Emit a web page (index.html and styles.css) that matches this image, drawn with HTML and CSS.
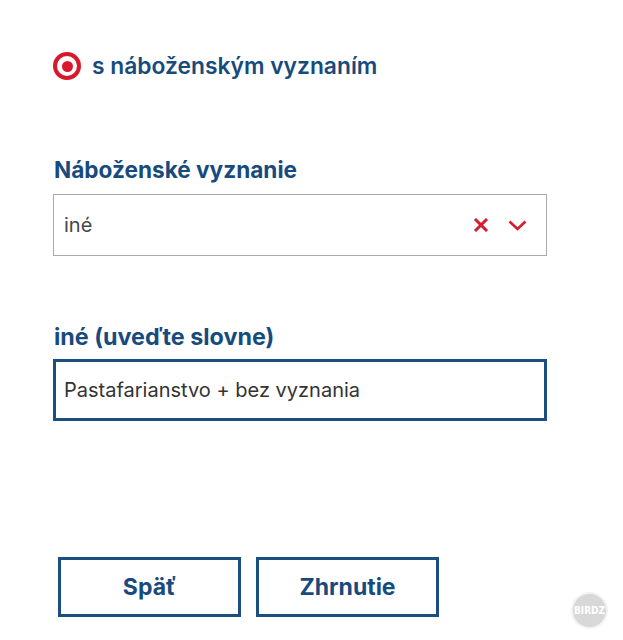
FILE: index.html
```html
<!DOCTYPE html>
<html lang="sk">
<head>
    <meta charset="UTF-8">
    <title>Náboženské vyznanie</title>
    <link rel="stylesheet" href="styles.css">
</head>
<body>
    <div class="wrapper">
        <label class="choice">
            <span class="radio"><span class="radio-dot"></span></span>
            <span class="choice-text">s náboženským vyznaním</span>
        </label>

        <div class="field field-select">
            <div class="field-label">Náboženské vyznanie</div>
            <div class="select">
                <span class="select-value">iné</span>
                <span class="select-icons">
                    <svg class="icon-clear" width="16" height="14" viewBox="0 0 16 14">
                        <path d="M2 1 L14 13 M14 1 L2 13" stroke="#d21f2f" stroke-width="3" fill="none"/>
                    </svg>
                    <svg class="icon-chevron" width="19" height="11" viewBox="0 0 19 11">
                        <path d="M1.5 1.5 L9.5 9 L17.5 1.5" stroke="#d21f2f" stroke-width="2.6" fill="none"/>
                    </svg>
                </span>
            </div>
        </div>

        <div class="field field-text">
            <label class="field-label" for="other">iné (uveďte slovne)</label>
            <input id="other" class="text-input" type="text" value="Pastafarianstvo + bez vyznania">
        </div>

        <div class="buttons">
            <button class="btn" type="button">Späť</button>
            <button class="btn" type="button">Zhrnutie</button>
        </div>
    </div>
    <div class="watermark">BIRDZ</div>
</body>
</html>
```

FILE: styles.css
```css
body, html {
    margin: 0;
    padding: 0;
    background: #fff;
}
body {
    font-family: Inter, "Noto Sans", sans-serif;
    color: #174b7e;
}
.wrapper {
    padding: 52px 76px 0 53px;
}
.choice {
    display: flex;
    align-items: center;
    height: 28px;
    gap: 11px;
}
.radio {
    width: 28px;
    height: 28px;
    box-sizing: border-box;
    border: 4px solid #d7192b;
    border-radius: 50%;
    display: flex;
    align-items: center;
    justify-content: center;
}
.radio-dot {
    width: 11px;
    height: 11px;
    border-radius: 50%;
    background: #d7192b;
}
.choice-text {
    font-size: 22.8px;
    font-weight: 600;
    line-height: 28px;
}
.field-label {
    display: block;
    font-size: 23px;
    font-weight: 700;
    line-height: 28px;
    margin-left: 1px;
}
.field-select {
    margin-top: 76px;
}
.field-select .field-label {
    font-size: 22.6px;
    margin-bottom: 10px;
}
.select {
    height: 62px;
    box-sizing: border-box;
    border: 1px solid #a9a9a9;
    display: flex;
    align-items: center;
    padding: 0 19px 0 10px;
}
.select-value {
    flex: 1;
    font-size: 20px;
    color: #474747;
}
.select-icons {
    display: flex;
    align-items: center;
    gap: 19px;
}
.field-text {
    margin-top: 67px;
}
.field-text .field-label {
    font-size: 23.3px;
    margin-bottom: 8px;
}
.text-input {
    display: block;
    width: 100%;
    height: 62px;
    box-sizing: border-box;
    border: 3px solid #1c4f80;
    padding: 0 8px;
    font-family: Inter, "Noto Sans", sans-serif;
    font-size: 20px;
    color: #333;
    outline: none;
    border-radius: 0;
}
.buttons {
    display: flex;
    gap: 15px;
    margin: 136px 0 0 5px;
}
.btn {
    width: 183px;
    height: 60px;
    background: #fff;
    border: 3px solid #1c4f80;
    border-radius: 0;
    font-family: Inter, "Noto Sans", sans-serif;
    font-size: 23px;
    font-weight: 700;
    color: #174b7e;
    cursor: pointer;
}
.watermark {
    position: absolute;
    left: 573px;
    top: 594px;
    width: 33px;
    height: 33px;
    border-radius: 50%;
    background: #d8d8d8;
    box-shadow: 0 0 0 2px #f2f2f2;
    color: #fff;
    font-family: "DejaVu Sans Condensed", "DejaVu Sans", sans-serif;
    font-weight: 700;
    font-size: 10px;
    display: flex;
    align-items: center;
    justify-content: center;
}
```
